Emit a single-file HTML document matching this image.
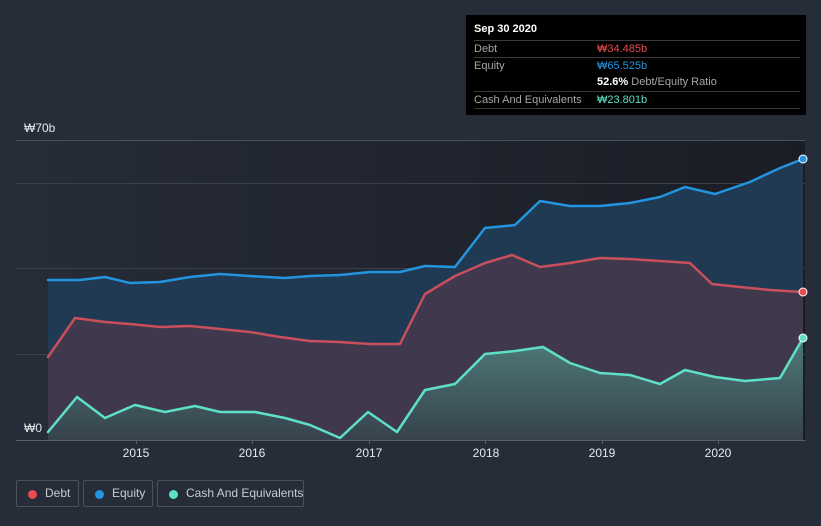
<!DOCTYPE html>
<html><head><meta charset="utf-8"><style>
html,body{margin:0;padding:0;background:#262d39;}
body{width:821px;height:526px;overflow:hidden;position:relative;font-family:"Liberation Sans",sans-serif;}
.tip{position:absolute;left:466px;top:15px;width:340px;height:100px;background:#000;color:#fff;font-size:11px;}
.tip .r{position:absolute;left:8px;right:6px;border-top:1px solid #3a3a3a;height:17px;line-height:17px;}
.tip .l{color:#a6a6a6;position:absolute;left:0}
.tip .v{position:absolute;left:123px;white-space:nowrap}
.lg{position:absolute;top:480px;border:1px solid #4a505c;border-radius:2px;color:#c8ccd2;font-size:12px;line-height:25px;box-sizing:border-box;height:27px;white-space:nowrap}
.lg i{position:absolute;left:11px;top:9px;width:9px;height:9px;border-radius:50%}
.lg span{position:absolute;left:28px}
</style></head><body>
<svg width="821" height="526" style="position:absolute;left:0;top:0">
<defs>
<linearGradient id="bg" x1="0" y1="0" x2="1" y2="0"><stop offset="0" stop-color="#262c38"/><stop offset="1" stop-color="#1a1d25"/></linearGradient>
<linearGradient id="cg" x1="0" y1="0" x2="0" y2="1"><stop offset="0" stop-color="#4f7a78"/><stop offset="1" stop-color="#36424c"/></linearGradient>
</defs>
<rect x="16" y="140" width="789" height="300" fill="url(#bg)"/>
<g stroke="#3a404b" stroke-width="1">
<line x1="16" y1="140.5" x2="805" y2="140.5" stroke="#4a505a"/>
<line x1="16" y1="183.5" x2="805" y2="183.5"/>
<line x1="16" y1="268.5" x2="805" y2="268.5"/>
<line x1="16" y1="354.5" x2="805" y2="354.5"/>
</g>
<polygon fill="#1f3a52" points="48,280 80,280 105,277 130,283 160,282 190,277 220,274 250,276 285,278 310,276 340,275 370,272 400,272 425,266 455,267 485,228 515,225 540,201 570,206 600,206 630,203 660,197 685,187 715,194 750,182 780,168 803,159 803,440 48,440"/>
<polygon fill="#40394d" points="48,357 75,318 105,322 130,324 160,327 190,326 220,329 250,332 280,337 310,341 340,342 370,344 400,344 425,294 455,276 485,263 512,255 540,267 570,263 600,258 630,259 660,261 690,263 712,284 740,287 770,290 803,292 803,440 48,440"/>
<polygon fill="url(#cg)" points="48,432 77,397 105,418 135,405 165,412 195,406 220,412 255,412 285,418 310,425 340,438 368,412 397,432 425,390 455,384 485,354 515,351 543,347 570,363 600,373 630,375 660,384 685,370 715,377 745,381 780,378 803,338 803,440 48,440"/>
<g fill="none" stroke-width="2.5" stroke-linejoin="round" stroke-linecap="round">
<polyline stroke="#2394df" points="48,280 80,280 105,277 130,283 160,282 190,277 220,274 250,276 285,278 310,276 340,275 370,272 400,272 425,266 455,267 485,228 515,225 540,201 570,206 600,206 630,203 660,197 685,187 715,194 750,182 780,168 803,159"/>
<polyline stroke="#c94f5c" points="48,357 75,318 105,322 130,324 160,327 190,326 220,329 250,332 280,337 310,341 340,342 370,344 400,344 425,294 455,276 485,263 512,255 540,267 570,263 600,258 630,259 660,261 690,263 712,284 740,287 770,290 803,292"/>
<polyline stroke="#5ee0c6" points="48,432 77,397 105,418 135,405 165,412 195,406 220,412 255,412 285,418 310,425 340,438 368,412 397,432 425,390 455,384 485,354 515,351 543,347 570,363 600,373 630,375 660,384 685,370 715,377 745,381 780,378 803,338"/>
</g>
<circle cx="803" cy="159" r="4" fill="#2394df" stroke="#fff" stroke-width="1"/>
<circle cx="803" cy="292" r="4" fill="#e84b50" stroke="#fff" stroke-width="1"/>
<circle cx="803" cy="338" r="4" fill="#5ee0c6" stroke="#fff" stroke-width="1"/>
<line x1="16" y1="440.5" x2="805" y2="440.5" stroke="#5a606a"/>
<g stroke="#5a606a"><line x1="136.5" y1="440" x2="136.5" y2="444"/><line x1="252.5" y1="440" x2="252.5" y2="444"/><line x1="369.5" y1="440" x2="369.5" y2="444"/><line x1="485.5" y1="440" x2="485.5" y2="444"/><line x1="602.5" y1="440" x2="602.5" y2="444"/><line x1="718.5" y1="440" x2="718.5" y2="444"/></g>
<g fill="#e6e8eb" font-size="12" font-family="Liberation Sans,sans-serif" text-anchor="middle">
<text x="136" y="457">2015</text><text x="252" y="457">2016</text><text x="369" y="457">2017</text><text x="486" y="457">2018</text><text x="602" y="457">2019</text><text x="718" y="457">2020</text>
</g>
<text x="24" y="132" fill="#e6e8eb" font-size="12">₩70b</text>
<text x="24" y="432" fill="#e6e8eb" font-size="12">₩0</text>
</svg>
<div class="tip">
<div style="position:absolute;left:8px;top:8px;font-weight:bold">Sep 30 2020</div>
<div class="r" style="top:25px"><span class="l">Debt</span><span class="v" style="color:#e84b50">₩34.485b</span></div>
<div class="r" style="top:42px"><span class="l">Equity</span><span class="v" style="color:#2394df">₩65.525b</span></div>
<div class="r" style="top:59px;border-top:none"><span class="v"><b>52.6%</b> <span style="color:#a6a6a6">Debt/Equity Ratio</span></span></div>
<div class="r" style="top:76px"><span class="l">Cash And Equivalents</span><span class="v" style="color:#5ee0c6">₩23.801b</span></div>
<div class="r" style="top:93px;height:0"></div>
</div>
<div class="lg" style="left:16px;width:63px"><i style="background:#e84b50"></i><span>Debt</span></div>
<div class="lg" style="left:83px;width:70px"><i style="background:#2394df"></i><span>Equity</span></div>
<div class="lg" style="left:157px;width:147px"><i style="background:#5ee0c6"></i><span>Cash And Equivalents</span></div>
</body></html>
